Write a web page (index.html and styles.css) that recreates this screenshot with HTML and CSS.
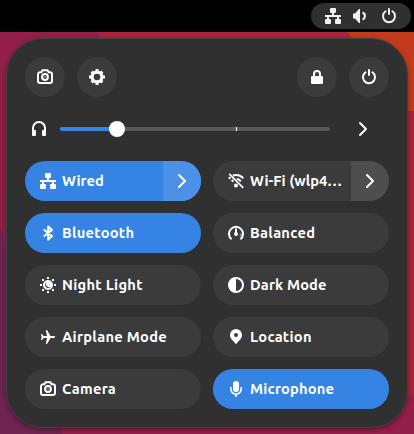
FILE: index.html
```html
<!DOCTYPE html>
<html lang="en">
<head>
<meta charset="utf-8">
<title>Quick Settings</title>
<link rel="stylesheet" href="styles.css">
</head>
<body>
<svg class="defs" width="0" height="0" aria-hidden="true">
  <symbol id="wired" viewBox="0 0 16 16"><path d="M6 0h4a1 1 0 0 1 1 1v3a1 1 0 0 1-1 1H9v2h7v2h-2v2h1a1 1 0 0 1 1 1v3a1 1 0 0 1-1 1h-4a1 1 0 0 1-1-1v-3a1 1 0 0 1 1-1h1V9H4v2h1a1 1 0 0 1 1 1v3a1 1 0 0 1-1 1H1a1 1 0 0 1-1-1v-3a1 1 0 0 1 1-1h1V9H0V7h7V5H6a1 1 0 0 1-1-1V1a1 1 0 0 1 1-1z"/></symbol>
  <symbol id="camera" viewBox="0 0 16 16"><path class="line" d="M5.500 1.300h5l1.200 2H13a2 2 0 0 1 2 2V12a2 2 0 0 1-2 2H3a2 2 0 0 1-2-2V5.300a2 2 0 0 1 2-2h1.300z"/><circle class="line" cx="8" cy="8" r="2.900"/><circle class="dim" cx="8" cy="8" r="1"/></symbol>
  <symbol id="gear" viewBox="0 0 16 16"><circle class="line thick" cx="8" cy="8" r="4.900"/><path class="line teeth" d="M8 0v3M8 13v3M0 8h3M13 8h3M2.600 2.600l2 2M11.400 11.400l2 2M13.400 2.600l-2 2M4.600 11.400l-2 2"/></symbol>
  <symbol id="lock" viewBox="0 0 16 16"><path d="M3 7h1V5a4 4 0 0 1 8 0v2h1a1 1 0 0 1 1 1v6a1 1 0 0 1-1 1H3a1 1 0 0 1-1-1V8a1 1 0 0 1 1-1zm3 0h4V5a2 2 0 0 0-4 0z"/></symbol>
  <symbol id="power" viewBox="0 0 16 16"><path class="line round" d="M8 1v5M4.600 3.300a6 6 0 1 0 6.800 0"/></symbol>
  <symbol id="headphones" viewBox="0 0 16 16"><path class="line" d="M2 11V7a6 6 0 0 1 12 0v4"/><path d="M1 9h3a1 1 0 0 1 1 1v4a1 1 0 0 1-1 1H2a1 1 0 0 1-1-1zM15 9h-3a1 1 0 0 0-1 1v4a1 1 0 0 0 1 1h2a1 1 0 0 0 1-1z"/></symbol>
  <symbol id="chevron" viewBox="0 0 16 16"><path class="line round" d="M5 2l6 6-6 6"/></symbol>
  <symbol id="speaker" viewBox="0 0 16 16"><path d="M0 5.500h2L6 1h1v14H6l-4-4.500H0z"/><path class="line" d="M9.500 4.500c3.200 1 3.200 6 0 7"/></symbol>
  <symbol id="wifi-off" viewBox="0 0 16 16"><path class="line" d="M4.800 2.500C9 1.300 13 2.600 15.300 5.400M8.800 6.100c1.600.200 3 .900 4 2.200"/><path d="M0 4.800l2-1.300 1.200 1.600L1.500 6.500zM3 7.500l1.900-1.200 1 1.700-1.500 1.400zM8 10.500a2 2 0 1 1-.1 4 2 2 0 0 1 .1-4z"/><path class="line slash" d="M1.200.800l14 14"/></symbol>
  <symbol id="bluetooth" viewBox="0 0 16 16"><path class="line bt" d="M3.700 4.500l8.300 6.500L8.200 14.600V1.400L12 5l-8.300 6.500"/></symbol>
  <symbol id="gauge" viewBox="0 0 16 16"><path class="line" d="M3.600 14.300A7 7 0 1 1 12.400 14.300"/><path class="line dim" d="M12.800 8.500v3.200"/><path class="line" d="M8 3.500V9"/><circle cx="8" cy="9" r="2"/></symbol>
  <symbol id="night" viewBox="0 0 16 16"><path fill-rule="evenodd" d="M8 3a5 5 0 1 0 0 10A5 5 0 0 0 8 3zM6.700 4.600a3.500 3.500 0 1 0 4.900 4.600A3.300 3.300 0 0 1 6.700 4.600z"/><path d="M7 0h2v2H7zM7 14h2v2H7zM0 7h2v2H0zM14 7h2v2h-2zM2 2h2v2H2zM12 2h2v2h-2zM2 12h2v2H2zM12 12h2v2h-2z"/></symbol>
  <symbol id="contrast" viewBox="0 0 16 16"><path fill-rule="evenodd" d="M8 0a8 8 0 1 0 0 16A8 8 0 0 0 8 0zm0 2a6 6 0 0 1 0 12z"/></symbol>
  <symbol id="plane" viewBox="0 0 16 16"><path d="M5.800 1H7l3.500 6H14a1 1 0 0 1 0 2h-3.500L7 15H5.800L7 9H3.500L2 11H1l.6-3L1 5h1l1.500 2H7z"/></symbol>
  <symbol id="pin" viewBox="0 0 16 16"><path fill-rule="evenodd" d="M8 0a6 6 0 0 0-6 6c0 4 3.500 5.500 5.300 8.600q.700.800 1.400 0C10.500 11.500 14 10 14 6a6 6 0 0 0-6-6zm0 4a2 2 0 1 1 0 4 2 2 0 0 1 0-4z"/></symbol>
  <symbol id="mic" viewBox="0 0 16 16"><rect x="5" y="0" width="6" height="11" rx="3"/><path class="line mic" d="M2.800 6v2a5.200 5.200 0 0 0 10.400 0V6M8 13v3"/></symbol>
</svg>

<svg class="wallpaper" viewBox="0 0 414 434" aria-hidden="true">
  <path fill="#ab233a" d="M0 0h414v434H0z"/>
  <path fill="#921f48" d="M0 32h97l70 100v302H0z"/>
  <path fill="#702451" d="M0 227l62 207H0z"/>
  <path fill="#c33b1d" d="M348 32h66v79h-10z"/>
  <path fill="#921f48" d="M62 420l352-24v38H62z"/>
</svg>

<header class="topbar">
  <div class="status">
    <svg class="icon"><use href="#wired"/></svg>
    <svg class="icon"><use href="#speaker"/></svg>
    <svg class="icon"><use href="#power"/></svg>
  </div>
</header>

<main class="panel">
  <div class="actions">
    <button class="round-btn"><svg class="icon"><use href="#camera"/></svg></button>
    <button class="round-btn"><svg class="icon"><use href="#gear"/></svg></button>
    <span class="spacer"></span>
    <button class="round-btn"><svg class="icon"><use href="#lock"/></svg></button>
    <button class="round-btn"><svg class="icon"><use href="#power"/></svg></button>
  </div>

  <div class="volume">
    <svg class="icon"><use href="#headphones"/></svg>
    <div class="track"><span class="fill"></span><span class="mark"></span><span class="knob"></span></div>
    <svg class="icon"><use href="#chevron"/></svg>
  </div>

  <div class="tiles">
    <div class="tile on"><svg class="icon"><use href="#wired"/></svg><span class="label wired">Wired</span><span class="more"><svg class="icon"><use href="#chevron"/></svg></span></div>
    <div class="tile"><svg class="icon"><use href="#wifi-off"/></svg><span class="label wifi">Wi-Fi (wlp4…</span><span class="more"><svg class="icon"><use href="#chevron"/></svg></span></div>
    <div class="tile on"><svg class="icon"><use href="#bluetooth"/></svg><span class="label">Bluetooth</span></div>
    <div class="tile"><svg class="icon"><use href="#gauge"/></svg><span class="label">Balanced</span></div>
    <div class="tile"><svg class="icon"><use href="#night"/></svg><span class="label">Night Light</span></div>
    <div class="tile"><svg class="icon"><use href="#contrast"/></svg><span class="label dark">Dark Mode</span></div>
    <div class="tile"><svg class="icon"><use href="#plane"/></svg><span class="label">Airplane Mode</span></div>
    <div class="tile"><svg class="icon"><use href="#pin"/></svg><span class="label">Location</span></div>
    <div class="tile"><svg class="icon"><use href="#camera"/></svg><span class="label">Camera</span></div>
    <div class="tile on"><svg class="icon"><use href="#mic"/></svg><span class="label microphone">Microphone</span></div>
  </div>
</main>
</body>
</html>
```
FILE: styles.css
```css
* { box-sizing: border-box; }

body {
  margin: 0;
  width: 414px;
  height: 434px;
  overflow: hidden;
  color: #fff;
  font: 600 14.67px/20px Ubuntu, "Noto Sans", "Open Sans", sans-serif;
}

.defs { position: absolute; }

.wallpaper {
  position: absolute;
  inset: 0;
  width: 414px;
  height: 434px;
  z-index: -1;
}

.icon {
  display: block;
  flex: none;
  width: 16px;
  height: 16px;
  fill: currentColor;
}

.line { fill: none; stroke: currentColor; stroke-width: 2; }
.thick { stroke-width: 3.2; }
.teeth { stroke-width: 3; }
.round { stroke-linecap: round; stroke-linejoin: round; }
.slash { stroke-width: 1.7; }
.bt { stroke-width: 2; stroke-linejoin: round; }
.mic { stroke-width: 1.7; }
.dim { opacity: .4; }

.topbar {
  display: flex;
  justify-content: flex-end;
  height: 32px;
  padding: 3px;
  background: #000;
}

.status {
  display: flex;
  align-items: center;
  gap: 12px;
  width: 100px;
  height: 26px;
  padding-left: 14px;
  border-radius: 13px;
  background: #303030;
  color: #f2f2f2;
}

.panel {
  width: 402px;
  height: 390px;
  margin: 6px 0 0 6px;
  padding: 18px;
  border: 1px solid #414141;
  border-radius: 37px;
  background: #303030;
  box-shadow: 0 2px 5px rgba(0, 0, 0, .35);
}

.actions { display: flex; gap: 12px; }
.spacer { flex: 1; }

.round-btn {
  display: grid;
  place-items: center;
  width: 40px;
  height: 40px;
  padding: 0;
  border: 0;
  border-radius: 50%;
  background: #3b3b3b;
  color: #fff;
}

.volume {
  display: flex;
  align-items: center;
  height: 64px;
  padding-left: 6px;
}

.track {
  position: relative;
  width: 270px;
  height: 4px;
  margin: 0 25px 0 13px;
  border-radius: 2px;
  background: #595959;
}

.fill {
  display: block;
  width: 57px;
  height: 4px;
  border-radius: 2px;
  background: #3584e4;
}

.mark {
  position: absolute;
  left: 176px;
  top: 0;
  width: 1px;
  height: 4px;
  background: #fff;
}

.knob {
  position: absolute;
  left: 49px;
  top: -6px;
  width: 16px;
  height: 16px;
  border-radius: 50%;
  background: #fff;
}

.tiles {
  display: grid;
  grid-template-columns: 176px 176px;
  gap: 12px;
}

.tile {
  display: flex;
  align-items: center;
  gap: 6px;
  height: 40px;
  padding-left: 15px;
  border-radius: 20px;
  background: #3b3b3b;
  overflow: hidden;
}

.on { background: #3584e4; }

.label {
  flex: 1;
  min-width: 0;
  white-space: nowrap;
  letter-spacing: .28px;
}

.wired { letter-spacing: .05px; }
.wifi { letter-spacing: .03px; }
.dark { letter-spacing: .12px; }
.microphone { letter-spacing: .2px; }

.more {
  display: grid;
  flex: none;
  place-items: center;
  width: 38px;
  height: 40px;
  background: #4e4e4e;
}

.on .more { background: #4a91e7; }
```
